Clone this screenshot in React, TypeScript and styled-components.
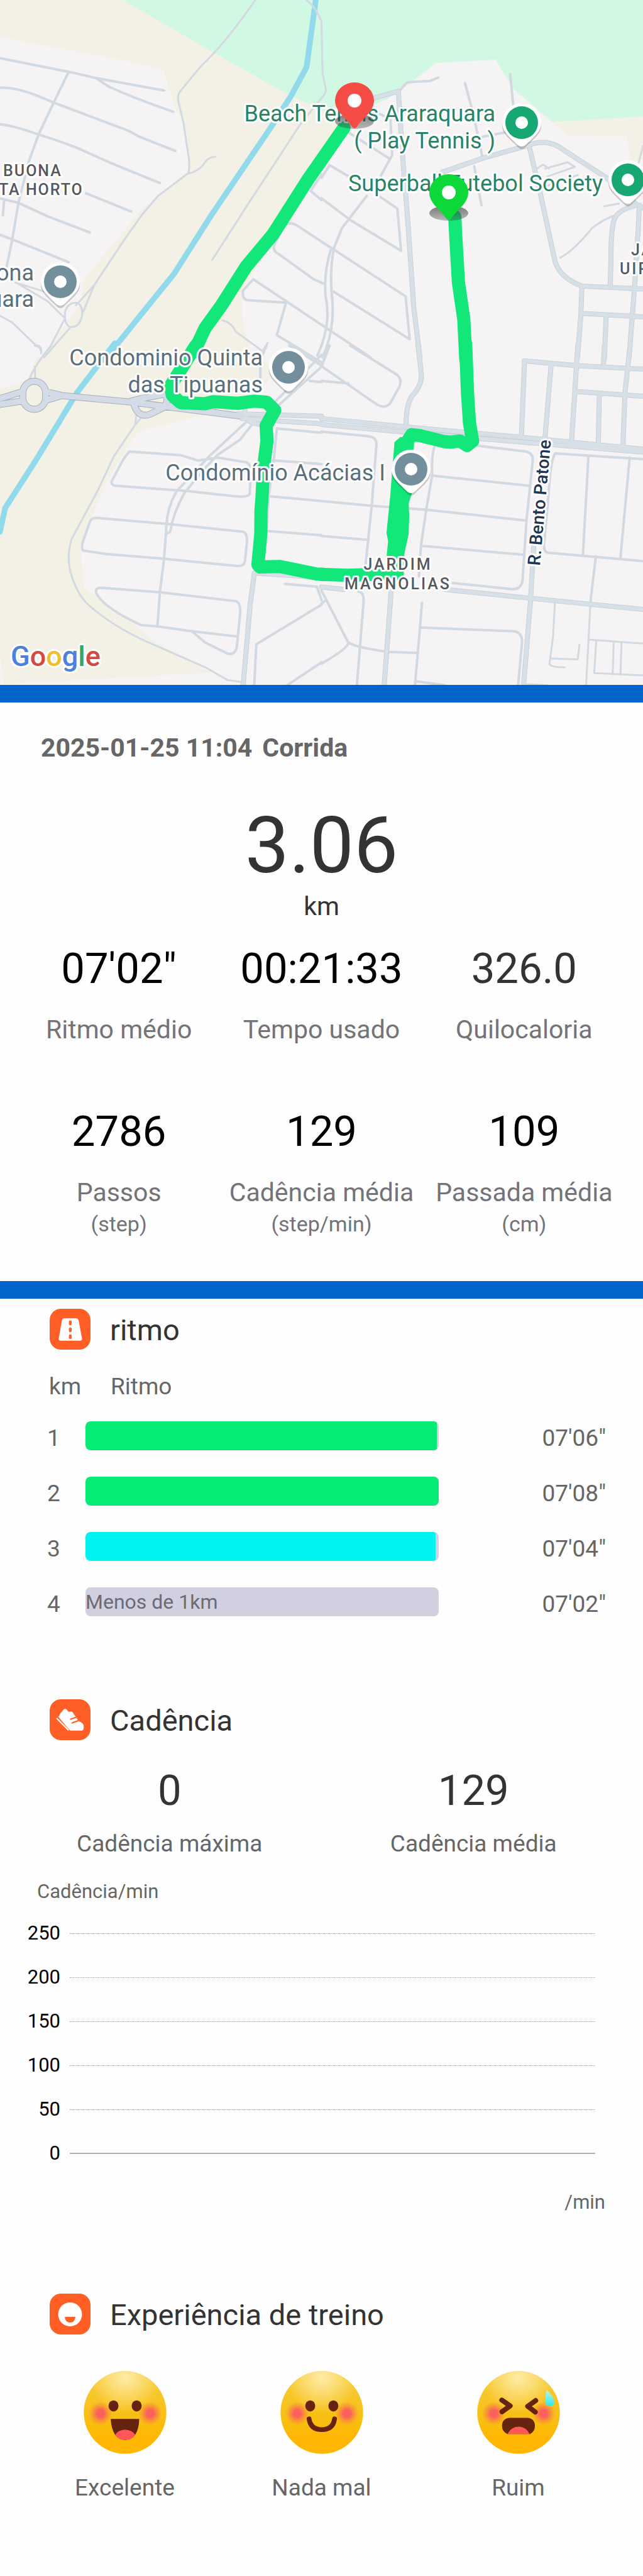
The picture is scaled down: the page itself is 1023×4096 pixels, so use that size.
import React, { useState } from "react";
import styled, { createGlobalStyle } from "styled-components";

const GlobalStyle = createGlobalStyle`
  body {
    margin: 0;
    background: #fefefe;
    font-family: Roboto, "Noto Sans", sans-serif;
    color: #333333;
  }
`;

/* ---------- map ---------- */

const MapSvg = styled.svg`
  display: block;
  width: 100%;
  height: auto;
  background: #f5f3f4;
  font-family: Roboto, "Noto Sans", sans-serif;

  path,
  ellipse {
    stroke-linejoin: round;
    stroke-linecap: round;
  }
`;

const Line = styled.path<{ $width: number }>`
  fill: none;
  stroke-width: ${(p) => p.$width}px;
  vector-effect: non-scaling-stroke;
`;

const MapText = styled.text<{ $size: number; $color: string; $weight?: number; $spacing?: number }>`
  font-size: ${(p) => p.$size}px;
  font-weight: ${(p) => p.$weight ?? 400};
  letter-spacing: ${(p) => p.$spacing ?? 0}px;
  fill: ${(p) => p.$color};
  stroke: #ffffff;
  stroke-width: 6px;
  stroke-linejoin: round;
  paint-order: stroke;
`;

type Tile = {
  transform: string;
  fields: [string, string][];
  streets: string;
  lanes: string;
  avenues: string;
  highways?: string;
  river?: string;
  route: string;
  routeFill?: string;
};

const FIELD = "#f3f0e5";
const PARK = "#d1f8e2";
const TOWN = "#f5f3f4";

const tiles: Tile[] = [
  {
    transform: "scale(.32622 .36245)",
    fields: [
      [FIELD, "M0,0H1580V1700H0Z"],
      [TOWN, "M0,162L600,265L780,300Q797,303 803,320L860,490L885,520L925,745L770,860L690,920L560,1060L410,1225L395,1330L250,1510L120,1720H0Z"],
      [TOWN, "M1580,640L1290,1110L1190,1270Q1165,1400 1210,1500L1260,1700H1580Z"],
      [PARK, "M600,0H1580V485L1400,412L1040,230Z"],
    ],
    river: "M1540,0L1495,295L1420,420L1320,560L1030,945L850,1200L535,1550",
    streets:
      "M0,255L335,315L470,343L800,397M470,343L530,380Q680,440 845,490M335,315L262,450L188,590L140,710L90,890L60,1050L30,1180M0,385Q80,380 210,430L262,450L630,575L680,600L855,662M0,545Q60,550 188,590Q280,615 380,650L540,715L780,803M420,848L640,928M0,870L90,890L235,950L438,1020M20,880L14,945M0,1030L60,1050L335,1150M1568,765L1515,838L1568,878M1568,1060L1450,990Q1405,965 1380,1000L1340,1070Q1325,1100 1360,1115L1530,1225L1568,1240M1568,1425L1235,1225L1185,1275Q1180,1310 1205,1317L1395,1328L1350,1470L1568,1590",
    lanes:
      "M1245,0Q1100,190 980,290L875,405Q865,420 870,445L895,540L922,700Q925,755 915,762L770,860L690,945L600,1060L460,1250L400,1380M915,762Q960,755 990,725Q1010,690 1050,688M1568,430L1465,545L1210,895L1035,1140M1495,0Q1540,30 1568,95M460,1250L370,1340M315,1400L240,1530M340,1440L215,1568M80,1240L230,1320L310,1390M75,1240L220,1280M0,1385L60,1415L175,1515Q205,1515 200,1548M1085,1405Q1130,1415 1150,1455L1280,1540L1305,1505M316,1385Q318,1330 372,1328Q405,1335 400,1385Q390,1435 345,1435Q318,1430 316,1385",
    avenues: "",
    route: "M1678,560L1500,790L1330,1030L1200,1170L1080,1340L1000,1440L945,1545",
  },
  {
    transform: "translate(511.5 0) scale(.32622 .36245)",
    fields: [
      [PARK, "M-4,0H1580V515L1125,535L930,385L850,262L560,275L460,345L330,430L130,510L-4,485Z"],
      [FIELD, "M-4,485L100,515L60,600L-4,660Z"],
      [FIELD, "M1125,535L1580,510V700L1505,700L1490,598L1200,595Z"],
    ],
    streets:
      "M385,395Q410,360 430,360L530,355L570,340M700,365L740,500L785,690M920,325L935,460M745,730L780,900M785,600L900,580M335,500L345,680L290,770M130,580L330,695M0,780L40,725L135,775M220,860L100,1000L60,1090M280,860L370,915L388,1100L140,965L0,870M0,1060L60,1095L410,1300L430,1488L60,1280M60,1090Q40,1180 50,1290Q70,1440 5,1568M45,1095Q10,1200 20,1300Q50,1420 -20,1560M0,1425L240,1568M0,1240L15,1245M240,480L330,520",
    lanes:
      "M0,95L5,320L22,395Q15,420 0,430M1165,1130Q1230,1100 1320,1000Q1380,960 1430,945M1380,905L1450,893M1050,740L1080,722L1110,740M1090,740L1200,712L1235,732L1100,775M1100,815L1250,768M1568,640L1545,720",
    avenues:
      "M255,430L375,400L395,680L420,960L450,1350L480,1568M590,755L800,690L1000,640Q1080,610 1150,640L1390,780L1540,900L1568,910M1015,650L1070,860L1140,1150Q1165,1220 1270,1255L1568,1268M1540,900Q1440,920 1425,970Q1410,1030 1412,1140L1408,1250M1550,900L1545,1000L1525,1280L1500,1568M1270,1255L1265,1380L1248,1568M1275,1375L1568,1390M1388,1390L1380,1568",
    route: "M650,950L655,1040L668,1240L694,1400L704,1580",
  },
  {
    transform: "translate(0 549.5) scale(.32622 .37455)",
    fields: [
      [FIELD, "M180,48H1270L1340,110L1200,270L960,302L690,360Q655,380 635,410L520,580L460,700L392,860L410,1030L620,1155L740,1250L1030,1388L20,1437L0,1320V185L130,150Z"],
    ],
    river: "M560,-10L375,200L180,480L25,690L0,790",
    streets:
      "M630,450L880,465L965,488L1060,475L1200,495Q1222,500 1222,540L1218,630Q1210,645 1150,640L905,617L560,595Q540,590 545,575L600,485ZM1225,340L1170,400L1060,465L1000,520L900,625Q845,710 830,790L812,800M1200,325L1020,470L860,620Q815,690 812,760L800,905L780,1045L768,1190M480,732L815,757L1185,790Q1205,795 1205,830L1195,915Q1190,940 1150,935L800,905L520,885L405,870Q395,860 405,830L440,745Q450,730 480,732M490,1028L780,1047L1150,1085Q1172,1090 1172,1130L1155,1280Q1145,1315 1110,1308L1000,1260L935,1212M490,1028Q455,1030 475,1060Q520,1120 690,1187L768,1192L930,1212L1155,1235M1568,370L1350,352L1335,490L1310,640L1300,790M1330,487L1568,503M1320,640L1568,660M1300,787L1568,805M1390,1012L1545,1023L1568,1080M1568,1100L1250,1268L1240,1442M1568,1345L1400,1442M1410,0L1568,85M1568,90L1350,260M1510,150L1568,155M1568,40L1340,240M1300,0L1270,60L1270,135",
    lanes:
      "M170,0Q205,5 200,33M250,0Q170,80 140,150M170,90L172,150M690,305L660,335L555,470L480,610L350,820Q320,900 350,980Q380,1060 430,1100Q560,1200 750,1270L1000,1365L1110,1420L1190,1430M665,295L660,330",
    avenues: "M1240,970L1220,1100L1185,1450M1240,965L1568,985M1160,290L1568,300M1180,310L1568,332M1195,275Q1185,335 1290,335",
    highways:
      "M0,225L112,195M0,250L112,235M112,211A56,50 0 1 0 222,211A56,50 0 1 0 112,211M222,195L300,212L225,232M300,212L640,240L1180,300M650,240Q670,310 730,292L805,260Q830,205 790,208L690,225L640,235M820,255L1060,285",
    route:
      "M955,0L880,105L832,170L840,210L880,242L1000,247L1040,238L1160,245L1240,236L1300,240L1340,275L1298,340L1302,405L1285,520L1278,640L1273,700L1272,800L1258,930L1268,940L1365,938L1545,970L1578,971",
  },
  {
    transform: "translate(511.5 549.5) scale(.32622 .37455)",
    fields: [],
    streets:
      "M140,0L370,125Q400,150 370,190L335,245Q310,270 270,250L0,88L40,0M0,150L130,160M0,365L230,385Q270,390 268,420L245,680L215,930M0,660L245,680L510,697L1000,743M0,808L230,825M550,430Q535,480 540,550L510,700L485,850L475,980M540,552L1010,595M485,850L985,888M760,425L1000,450Q1035,460 1030,490L1000,740L980,1000Q970,1040 920,1033L640,1008M1568,482L1140,458Q1120,480 1110,600L1085,850Q1085,880 1110,880L1568,915M1302,470L1275,885M1503,475L1458,900M1338,895L1312,1085M490,1092L480,1200L455,1450M485,1197L940,1213Q980,1220 978,1260L958,1450M460,1425L600,1442M0,1040L130,1260Q160,1280 320,1300L470,1305M130,1265Q120,1290 0,1350M180,1045Q208,1045 205,1090L172,1450M0,1095L15,1085",
    lanes:
      "M1312,1085L1290,1450M1138,1095L1130,1230L1112,1350Q1115,1365 1185,1366M1120,1328L1250,1332L1258,1270M1305,1248L1568,1265M1340,1255L1330,1390L1568,1400M1425,1260L1420,1395M1463,1262L1458,1398M990,1438L1100,1442",
    avenues:
      "M470,-10L488,130Q485,175 440,215Q412,260 412,335M0,310L412,345L980,390L1568,440M0,335L412,368L980,410L1568,452M975,385L990,65L1240,85L1568,100M1120,80L1090,390M1250,0L1235,200L1220,400M1380,0L1375,85M1505,0L1480,200L1470,430M1245,195L1568,215M1355,210L1350,410M1035,850L1020,1075L985,1450M600,1035L1020,1073L1568,1120M340,1040L305,1450M0,1025L110,1035",
    route:
      "M-4,971L130,975L370,968M420,405L440,378L480,382L600,408L630,410L675,405L710,424L737,405L722,330L712,200L703,-10",
    routeFill:
      "M356,410L385,388L452,398L450,440L440,630L425,670L428,720L425,800L405,880L398,965L330,975L318,890L325,830L317,795L335,640Z",
  },
];

type PinProps = { x: number; y: number; color: string };

const PlacePin = ({ x, y, color }: PinProps) => (
  <g transform={`translate(${x} ${y})`}>
    <path d="M-31,2A31,31 0 1 1 31,2C31,14 22,20 7,35Q0,43 -7,35C-22,20 -31,14 -31,2Z" fill="#00000030" transform="translate(0 3)" />
    <path d="M-31,0A31,31 0 1 1 31,0C31,13 22,20 8,34Q0,42 -8,34C-22,20 -31,13 -31,0Z" fill="#ffffff" />
    <circle r="26" fill={color} />
    <circle r="10" fill="#ffffff" />
  </g>
);

const RoutePin = ({ x, y, color }: PinProps) => (
  <g transform={`translate(${x} ${y})`}>
    <ellipse cx="0" cy="33" rx="31" ry="12" fill="url(#pinShadow)" />
    <path d="M-31,0A31,29 0 1 1 31,0C31,17 14,27 5,40Q0,48 -5,40C-14,27 -31,17 -31,0Z" fill={color} />
    <circle cx="0" cy="0" r="11" fill="#ffffff" />
  </g>
);

const GREEN_TEXT = "#2b8366";
const SLATE = "#5a6f7c";
const AREA = "#55585c";

const RouteMap = () => (
  <MapSvg viewBox="0 0 1023 1089" role="img" aria-label="Mapa do percurso">
    <defs>
      <linearGradient id="pinShadow" x1="0" y1="0" x2="0" y2="1">
        <stop offset="0" stopColor="#333333" stopOpacity=".65" />
        <stop offset="1" stopColor="#333333" stopOpacity=".3" />
      </linearGradient>
    </defs>
    {tiles.map((t, i) => (
      <g key={i} transform={t.transform}>
        {t.fields.map(([color, d], k) => (
          <path key={k} d={d} fill={color} />
        ))}
      </g>
    ))}
    {tiles.map((t, i) => (
      <g key={i} transform={t.transform}>
        {t.river && <Line d={t.river} stroke="#90daec" $width={9} />}
        <Line d={t.lanes} stroke="#d2d9e1" $width={3} />
        <Line d={t.streets} stroke="#d2d9e1" $width={4} />
      </g>
    ))}
    {tiles.map((t, i) => (
      <g key={i} transform={t.transform}>
        <Line d={t.avenues} stroke="#c8d2d9" $width={8} />
        {t.highways && <Line d={t.highways} stroke="#a5afbb" $width={11} />}
      </g>
    ))}
    {tiles.map((t, i) => (
      <g key={i} transform={t.transform}>
        <Line d={t.avenues} stroke="#d7e0e6" $width={6} />
        {t.highways && <Line d={t.highways} stroke="#d3dce6" $width={9} />}
      </g>
    ))}
    {tiles.map((t, i) => (
      <g key={i} transform={t.transform}>
        <Line d={t.route} stroke="#14e77a" $width={21} />
        {t.routeFill && <path d={t.routeFill} fill="#14e77a" />}
      </g>
    ))}

    <MapText x="5" y="280" $size={25} $color={AREA} $weight={500} $spacing={2}>BUONA</MapText>
    <MapText x="-2" y="310" $size={25} $color={AREA} $weight={500} $spacing={2}>TA HORTO</MapText>
    <MapText x="1004" y="406" $size={25} $color={AREA} $weight={500} $spacing={3}>JA</MapText>
    <MapText x="986" y="436" $size={25} $color={AREA} $weight={500} $spacing={3}>UIR</MapText>
    <MapText x="633" y="906" textAnchor="middle" $size={25} $color={AREA} $weight={500} $spacing={3}>JARDIM</MapText>
    <MapText x="633" y="937" textAnchor="middle" $size={25} $color={AREA} $weight={500} $spacing={3}>MAGNOLIAS</MapText>

    <MapText x="54" y="446" textAnchor="end" $size={36} $color={SLATE}>ona</MapText>
    <MapText x="54" y="488" textAnchor="end" $size={36} $color={SLATE}>uara</MapText>
    <MapText x="418" y="581" textAnchor="end" $size={36} $color={SLATE}>Condominio Quinta</MapText>
    <MapText x="418" y="624" textAnchor="end" $size={36} $color={SLATE}>das Tipuanas</MapText>
    <MapText x="613" y="764" textAnchor="end" $size={36} $color={SLATE}>Condomínio Acácias I</MapText>
    <MapText x="788" y="193" textAnchor="end" $size={36} $color={GREEN_TEXT}>Beach Tennis Araraquara</MapText>
    <MapText x="788" y="236" textAnchor="end" $size={36} $color={GREEN_TEXT}>( Play Tennis )</MapText>
    <MapText x="959" y="304" textAnchor="end" $size={36} $color={GREEN_TEXT}>Superball Futebol Society</MapText>
    <MapText transform="translate(859 900) rotate(-85)" $size={28} $color="#1f3553" $weight={500}>R. Bento Patone</MapText>

    <PlacePin x={96} y={448} color="#748f9c" />
    <PlacePin x={459} y={584} color="#748f9c" />
    <PlacePin x={654} y={746} color="#748f9c" />
    <PlacePin x={830} y={195} color="#17a773" />
    <PlacePin x={999} y={286} color="#17a773" />
    <RoutePin x={564} y={160} color="#f54c45" />
    <RoutePin x={714} y={306} color="#0cd83a" />

    <MapText x="17" y="1059" $size={45} $color="#4c80dc" $weight={500}>
      <tspan>G</tspan>
      <tspan fill="#d24a40">o</tspan>
      <tspan fill="#efc02b">o</tspan>
      <tspan>g</tspan>
      <tspan fill="#3da25a">l</tspan>
      <tspan fill="#d24a40">e</tspan>
    </MapText>
  </MapSvg>
);

/* ---------- page parts ---------- */

const Divider = styled.hr`
  height: 28px;
  margin: 0;
  border: 0;
  background: #0066cc;
`;

const Summary = styled.section`
  padding: 48px 28px 71px;
`;

const SummaryTitle = styled.h1`
  display: flex;
  gap: 16px;
  margin: 0 0 60px;
  padding-left: 37px;
  font-size: 41px;
  line-height: 48px;
  font-weight: 700;
  color: #666666;
`;

const Distance = styled.div`
  text-align: center;
  font-size: 41px;
  line-height: 48px;
`;

const DistanceValue = styled.div`
  font-size: 125px;
  line-height: 144px;
`;

const StatGrid = styled.dl<{ $columns: number; $top: number }>`
  display: grid;
  grid-template-columns: repeat(${(p) => p.$columns}, 1fr);
  row-gap: 98px;
  margin: ${(p) => p.$top}px 0 0;
`;

const Stat = styled.div`
  display: flex;
  flex-direction: column-reverse;
  justify-content: flex-end;
  align-items: center;
  white-space: nowrap;
`;

const StatValue = styled.dd<{ $soft?: boolean }>`
  margin: 0;
  font-size: 67px;
  line-height: 80px;
  color: ${(p) => (p.$soft ? "#333333" : "#000000")};
`;

const StatLabel = styled.dt<{ $compact?: boolean }>`
  margin-top: ${(p) => (p.$compact ? 23 : 33)}px;
  text-align: center;
  font-size: ${(p) => (p.$compact ? 37 : 41)}px;
  line-height: ${(p) => (p.$compact ? 44 : 48)}px;
  color: ${(p) => (p.$compact ? "#666666" : "#737378")};
`;

const StatUnit = styled.div`
  margin-top: 6px;
  font-size: 34px;
  line-height: 40px;
`;

const SectionHeading = styled.header`
  display: flex;
  align-items: center;
  gap: 31px;
  height: 65px;
  padding-left: 79px;
`;

const IconTile = styled.svg`
  width: 65px;
  height: 65px;
  border-radius: 18px;
  background: #ff5e24;
`;

const SectionTitle = styled.h2`
  margin: 0;
  padding-top: 2px;
  font-size: 47px;
  line-height: 54px;
  font-weight: 400;
`;

const PaceSection = styled.section`
  padding: 16px 59px 0 0;
`;

const PaceTable = styled.table`
  width: calc(100% - 75px);
  margin: 37px 0 0 75px;
  table-layout: fixed;
  border-collapse: collapse;
  font-size: 37px;
  line-height: 44px;
  color: #666666;

  th,
  td {
    padding: 0;
    font-weight: 400;
    text-align: left;
  }

  thead th {
    height: 56px;
    vertical-align: top;
  }

  tbody th,
  tbody td {
    height: 81px;
    padding-top: 7px;
  }

  tbody td:nth-child(2) {
    height: 88px;
    padding-top: 0;
  }

  tbody td:last-child {
    text-align: right;
  }
`;

const KmColumn = styled.col`
  width: 61px;
`;

const BarColumn = styled.col`
  width: 63.2%;
`;

const PaceHead = styled.span<{ $indent: number }>`
  padding-left: ${(p) => p.$indent}px;
  white-space: nowrap;
`;

const Track = styled.div`
  height: 46px;
  border-radius: 8px;
  overflow: hidden;
  background: #d1d0e0;
  font-size: 32px;
  line-height: 46px;
  color: #6b6b76;
`;

const Fill = styled.div<{ $color: string }>`
  height: 100%;
  border-radius: 8px 4px 4px 8px;
  background: ${(p) => p.$color};
`;

const CadenceSection = styled.section`
  padding: 111px 28px 0;

  ${SectionHeading} {
    padding-left: 51px;
  }
`;

const AxisTitle = styled.div`
  margin: 34px 0 0 31px;
  font-size: 31px;
  line-height: 40px;
  color: #666666;
`;

const Chart = styled.div`
  margin: 11px 48px 0 0;
`;

const GridRow = styled.div<{ $base?: boolean }>`
  display: grid;
  grid-template-columns: 68px 1fr;
  column-gap: 15px;
  align-items: center;
  height: 70px;
  font-size: 31px;
  line-height: 40px;
  text-align: right;
  color: #000000;

  &::after {
    content: "";
    border-top: ${(p) => (p.$base ? "2px solid #b0b0b0" : "1px dotted #a0a0a0")};
  }
`;

const XAxisTitle = styled.div`
  margin: 23px 32px 0 0;
  text-align: right;
  font-size: 31px;
  line-height: 40px;
  color: #666666;
`;

const FeelingSection = styled.section`
  padding: 125px 0 118px;
`;

const FeelingList = styled.div`
  display: grid;
  grid-template-columns: repeat(3, 1fr);
  margin-top: 58px;
  padding: 0 42px;
`;

const FeelingButton = styled.button`
  display: flex;
  flex-direction: column;
  align-items: center;
  gap: 32px;
  padding: 0;
  border: 0;
  background: none;
  font-family: inherit;
  font-size: 37px;
  line-height: 44px;
  color: #666666;
  cursor: pointer;
`;

const Face = styled.svg`
  width: 132px;
  height: 132px;
`;

/* ---------- icons ---------- */

const RoadIcon = () => (
  <IconTile viewBox="40 33 206 206" aria-hidden="true">
    <path d="M114,81H173Q183,81 186,91L203,182Q204,194 193,194H95Q84,194 86,182L102,91Q105,81 114,81Z" fill="#ffffff" />
    <g fill="#ff5e24">
      <rect x="137" y="92" width="14" height="24" rx="7" />
      <rect x="137" y="127" width="14" height="24" rx="7" />
      <rect x="137" y="162" width="14" height="24" rx="7" />
    </g>
  </IconTile>
);

const ShoeIcon = () => (
  <IconTile viewBox="40 33 206 206" aria-hidden="true">
    <path d="M77,130L133,187" stroke="#ffffff" strokeWidth="7" strokeLinecap="round" />
    <path
      d="M84,122L95,103L110,85Q120,76 128,87Q133,99 145,95Q155,93 159,103L172,122L186,144Q212,150 212,172Q213,190 202,191H150Q143,191 138,185Z"
      fill="#ffffff"
    />
    <path d="M146,133L172,124M154,152L181,142" stroke="#ff5e24" strokeWidth="7" strokeLinecap="round" />
  </IconTile>
);

const SmileIcon = () => (
  <IconTile viewBox="0 0 65 65" aria-hidden="true">
    <circle cx="32.5" cy="33" r="19" fill="#ffffff" />
    <path d="M24,37H41Q40,46 32.500,46Q25,46 24,37Z" fill="#ff5e24" />
  </IconTile>
);

const BROWN = "#66230f";

const FaceBase = ({ children }: { children: React.ReactNode }) => (
  <Face viewBox="30 32 416 416" aria-hidden="true">
    <defs>
      <linearGradient id="faceBody" x1="0" y1="0" x2="0" y2="1">
        <stop offset="0" stopColor="#f5cf40" />
        <stop offset=".55" stopColor="#f8bf14" />
        <stop offset=".8" stopColor="#ffb703" />
      </linearGradient>
      <radialGradient id="faceShine" cx=".5" cy=".08" r=".42">
        <stop offset="0" stopColor="#ffeba6" />
        <stop offset="1" stopColor="#ffeba6" stopOpacity="0" />
      </radialGradient>
      <radialGradient id="cheek">
        <stop offset=".3" stopColor="#fa605c" />
        <stop offset="1" stopColor="#fa8040" stopOpacity="0" />
      </radialGradient>
      <linearGradient id="sweat" x1="0" y1="0" x2="0" y2="1">
        <stop offset="0" stopColor="#c0f5dc" />
        <stop offset="1" stopColor="#2de6f5" />
      </linearGradient>
    </defs>
    <circle cx="238" cy="240" r="207" fill="url(#faceBody)" />
    <circle cx="238" cy="240" r="207" fill="url(#faceShine)" />
    <circle cx="114" cy="245" r="60" fill="url(#cheek)" />
    <circle cx="364" cy="245" r="60" fill="url(#cheek)" />
    {children}
  </Face>
);

const Eyes = () => (
  <g fill={BROWN}>
    <ellipse cx="180" cy="207" rx="25" ry="28" />
    <ellipse cx="296" cy="207" rx="25" ry="28" />
  </g>
);

const GreatFace = () => (
  <FaceBase>
    <Eyes />
    <path d="M166,272H309Q308,320 289,352Q270,377 238,378Q206,377 188,352Q168,320 166,272Z" fill={BROWN} />
    <path d="M188,352Q204,327 238,326Q272,327 289,352Q270,377 238,378Q206,377 188,352Z" fill="#ff5757" />
  </FaceBase>
);

const OkFace = () => (
  <FaceBase>
    <Eyes />
    <path d="M174,272Q182,326 238,326Q294,326 302,272" fill="none" stroke={BROWN} strokeWidth="24" strokeLinecap="round" />
  </FaceBase>
);

const BadFace = () => (
  <FaceBase>
    <path
      d="M154,178L196,207L155,236M324,180L284,209L322,238"
      fill="none"
      stroke={BROWN}
      strokeWidth="25"
      strokeLinecap="round"
      strokeLinejoin="round"
    />
    <path d="M196,267H280Q320,269 320,308Q320,335 296,348H182Q155,335 155,308Q155,269 196,267Z" fill={BROWN} />
    <path d="M182,348Q202,312 238,311Q275,312 294,348Z" fill="#ff5757" />
    <path d="M380,126Q418,168 418,186Q415,209 395,209Q373,206 371,180Q371,150 380,126Z" fill="url(#sweat)" />
  </FaceBase>
);

/* ---------- data ---------- */

const stats = [
  { value: "07'02\"", label: "Ritmo médio" },
  { value: "00:21:33", label: "Tempo usado" },
  { value: "326.0", label: "Quilocaloria", soft: true },
  { value: "2786", label: "Passos", unit: "(step)" },
  { value: "129", label: "Cadência média", unit: "(step/min)" },
  { value: "109", label: "Passada média", unit: "(cm)" },
];

const paces = [
  { km: 1, seconds: 426, color: "#04ec74" },
  { km: 2, seconds: 428, color: "#04ec74" },
  { km: 3, seconds: 424, color: "#00f3f0" },
  { km: 4, seconds: 422, note: "Menos de 1km" },
];

const slowest = Math.max(...paces.map((p) => p.seconds));
const two = (n: number) => String(n).padStart(2, "0");
const formatPace = (s: number) => `${two(Math.floor(s / 60))}'${two(s % 60)}"`;

const feelings = [
  { label: "Excelente", Icon: GreatFace },
  { label: "Nada mal", Icon: OkFace },
  { label: "Ruim", Icon: BadFace },
];

export default function App() {
  const [feeling, setFeeling] = useState<string | null>(null);

  return (
    <main>
      <GlobalStyle />
      <RouteMap />
      <Divider />

      <Summary>
        <SummaryTitle>
          <span>2025-01-25 11:04</span>
          <span>Corrida</span>
        </SummaryTitle>
        <Distance>
          <DistanceValue>3.06</DistanceValue>
          km
        </Distance>
        <StatGrid $columns={3} $top={35}>
          {stats.map((s) => (
            <Stat key={s.label}>
              <StatLabel>
                {s.label}
                {s.unit && <StatUnit>{s.unit}</StatUnit>}
              </StatLabel>
              <StatValue $soft={s.soft}>{s.value}</StatValue>
            </Stat>
          ))}
        </StatGrid>
      </Summary>
      <Divider />

      <PaceSection>
        <SectionHeading>
          <RoadIcon />
          <SectionTitle>ritmo</SectionTitle>
        </SectionHeading>
        <PaceTable>
          <colgroup>
            <KmColumn />
            <BarColumn />
            <col />
          </colgroup>
          <thead>
            <tr>
              <th scope="col"><PaceHead $indent={3}>km</PaceHead></th>
              <th scope="col" colSpan={2}><PaceHead $indent={40}>Ritmo</PaceHead></th>
            </tr>
          </thead>
          <tbody>
            {paces.map((p) => (
              <tr key={p.km}>
                <th scope="row">{p.km}</th>
                <td>
                  <Track>
                    {p.note ?? <Fill $color={p.color!} style={{ width: `${(p.seconds / slowest) * 100}%` }} />}
                  </Track>
                </td>
                <td>{formatPace(p.seconds)}</td>
              </tr>
            ))}
          </tbody>
        </PaceTable>
      </PaceSection>

      <CadenceSection>
        <SectionHeading>
          <ShoeIcon />
          <SectionTitle>Cadência</SectionTitle>
        </SectionHeading>
        <StatGrid $columns={2} $top={40}>
          <Stat>
            <StatLabel $compact>Cadência máxima</StatLabel>
            <StatValue $soft>0</StatValue>
          </Stat>
          <Stat>
            <StatLabel $compact>Cadência média</StatLabel>
            <StatValue $soft>129</StatValue>
          </Stat>
        </StatGrid>
        <AxisTitle>Cadência/min</AxisTitle>
        <Chart>
          {[250, 200, 150, 100, 50, 0].map((n) => (
            <GridRow key={n} $base={n === 0}>{n}</GridRow>
          ))}
        </Chart>
        <XAxisTitle>/min</XAxisTitle>
      </CadenceSection>

      <FeelingSection>
        <SectionHeading>
          <SmileIcon />
          <SectionTitle>Experiência de treino</SectionTitle>
        </SectionHeading>
        <FeelingList>
          {feelings.map(({ label, Icon }) => (
            <FeelingButton key={label} type="button" aria-pressed={feeling === label} onClick={() => setFeeling(label)}>
              <Icon />
              {label}
            </FeelingButton>
          ))}
        </FeelingList>
      </FeelingSection>
    </main>
  );
}
